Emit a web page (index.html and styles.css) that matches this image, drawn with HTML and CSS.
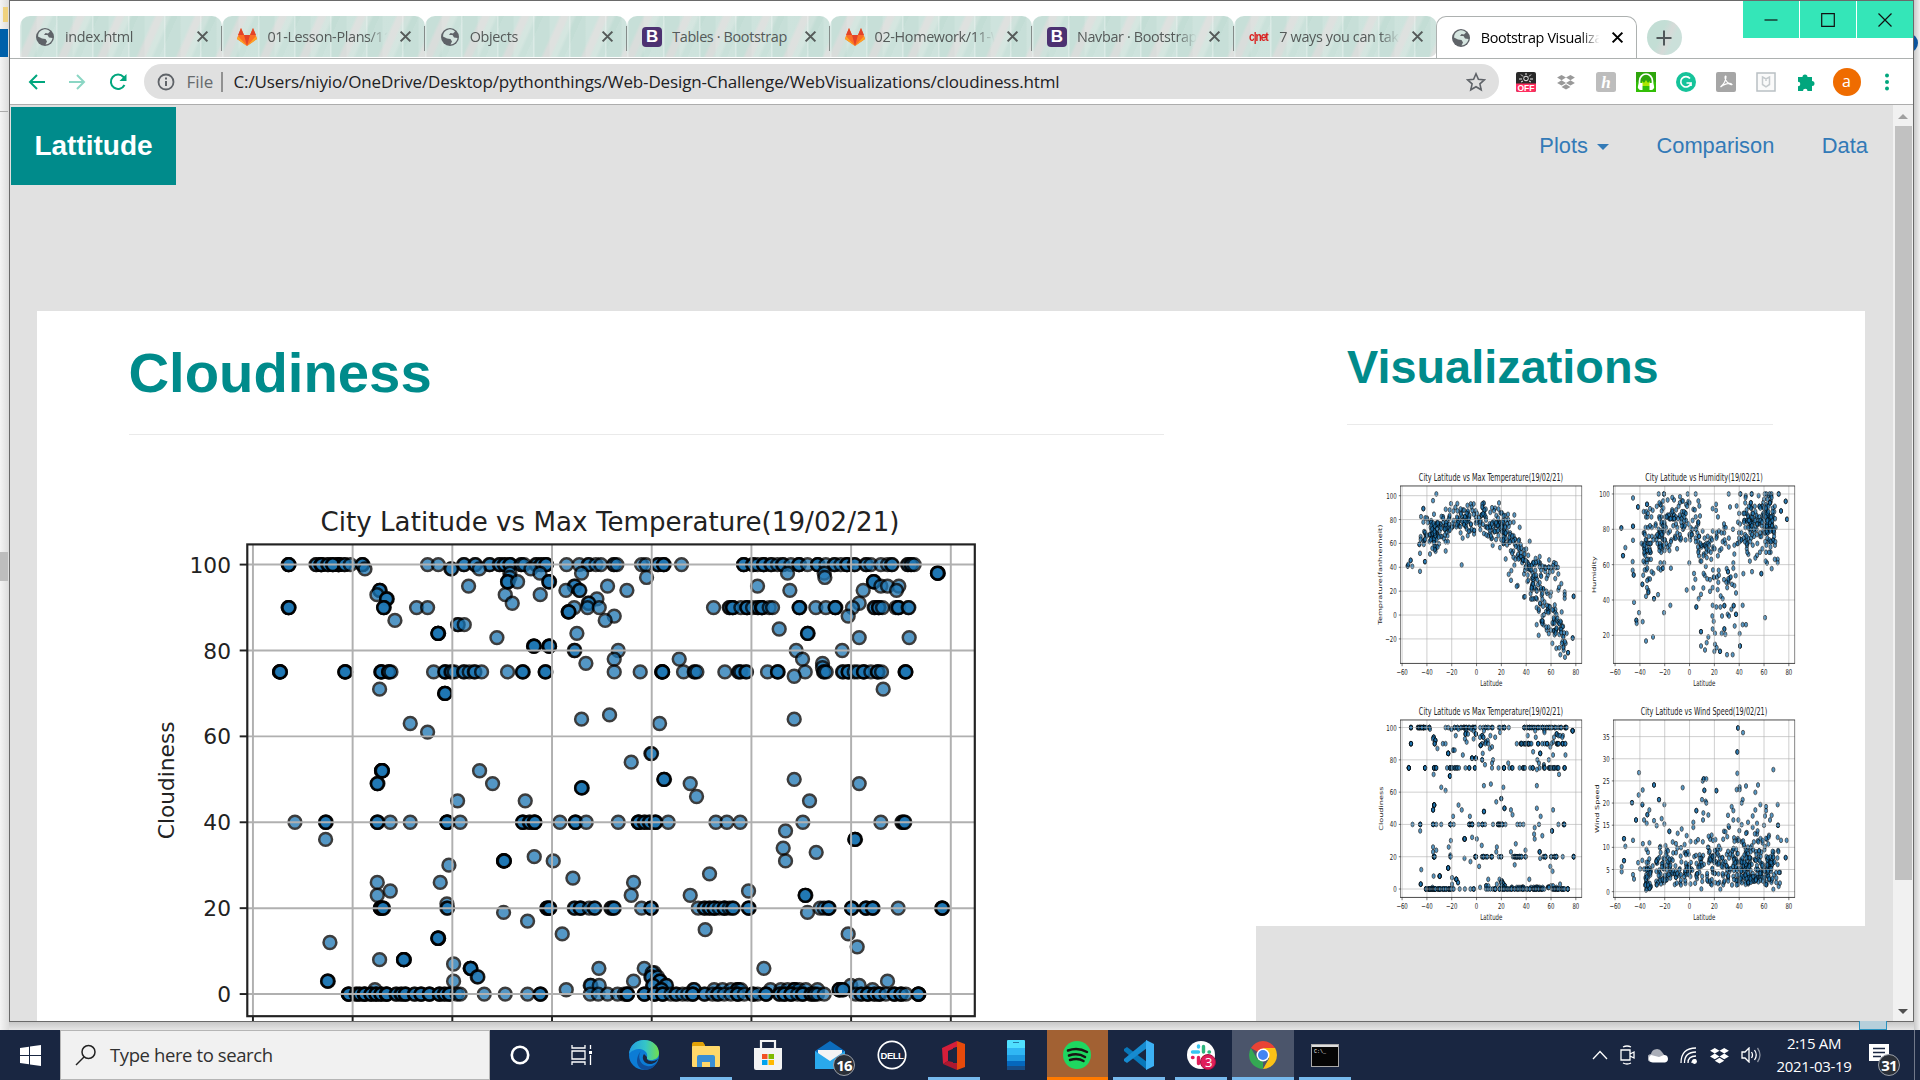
FILE: index.html
```html
<!DOCTYPE html>
<html lang="en">
<head>
<meta charset="utf-8">
<title>Bootstrap Visualizations</title>
<link rel="stylesheet" href="styles.css">
</head>
<body>
<svg class="defs" width="0" height="0">
  <symbol id="globe" viewBox="0 0 20 20"><circle cx="10" cy="10" r="9" fill="#5f6368"/><path d="M8.500 2.500C11 1.500 14 3 15 4.500L13 6.500 10.500 6 9 8H12.500L14 10.500 17.500 11C17 14.500 14 17.500 10.500 17.500L12 14.500 10.500 12 7 11.500 3 9.500C3 6 5 3.500 8.500 2.500Z" fill="#d5e5e0"/></symbol>
  <symbol id="fox" viewBox="0 0 20 20"><path d="M1 9 4 1 7 8H13L16 1 19 9 20 12 10 19 0 12Z" fill="#fc6d26"/><path d="M4 1 7 8H1ZM16 1 19 8H13ZM7 8H13L10 19Z" fill="#e24329"/><path d="M1 9 0 12 10 19ZM19 9 20 12 10 19Z" fill="#fca326"/></symbol>
  <symbol id="cross" viewBox="0 0 12 12"><path d="M1.500 1.500 10.500 10.500M10.500 1.500 1.500 10.500" stroke="currentColor" stroke-width="1.900"/></symbol>
  <symbol id="dropbox" viewBox="0 0 20 18"><path d="M5 1 10 4 5 7 0 4ZM15 1 20 4 15 7 10 4ZM5 7 10 10 5 13 0 10ZM15 7 20 10 15 13 10 10ZM10 11.500 15 14.500 10 17.500 5 14.500Z" fill="currentColor"/></symbol>
</svg>

<div class="desktop">
  <div class="edge edge-left"><i class="folder"></i><i class="blue"></i><i class="line"></i><i class="grip"></i></div>

  <div class="window">
    <div class="tabstrip">
      <div class="tab"><svg class="fav"><use href="#globe"/></svg><span class="title">index.html</span><svg class="x"><use href="#cross"/></svg></div>
      <div class="tab"><svg class="fav"><use href="#fox"/></svg><span class="title">01-Lesson-Plans/11</span><svg class="x"><use href="#cross"/></svg></div>
      <div class="tab"><svg class="fav"><use href="#globe"/></svg><span class="title">Objects</span><svg class="x"><use href="#cross"/></svg></div>
      <div class="tab"><b class="bs">B</b><span class="title plain">Tables · Bootstrap</span><svg class="x"><use href="#cross"/></svg></div>
      <div class="tab"><svg class="fav"><use href="#fox"/></svg><span class="title">02-Homework/11-W</span><svg class="x"><use href="#cross"/></svg></div>
      <div class="tab"><b class="bs">B</b><span class="title">Navbar · Bootstrap</span><svg class="x"><use href="#cross"/></svg></div>
      <div class="tab"><b class="cnet">c|net</b><span class="title">7 ways you can take</span><svg class="x"><use href="#cross"/></svg></div>
      <div class="tab active"><svg class="fav"><use href="#globe"/></svg><span class="title">Bootstrap Visualiza</span><svg class="x"><use href="#cross"/></svg></div>
      <div class="newtab"><svg width="16" height="16" viewBox="0 0 16 16"><path d="M8 .5V15.500M.5 8H15.500" stroke="#50585a" stroke-width="2"/></svg></div>
      <div class="controls">
        <span><svg width="14" height="14" viewBox="0 0 14 14"><path d="M.5 7H13.500"/></svg></span>
        <span><svg width="14" height="14" viewBox="0 0 14 14"><path d="M.7.7H13.300V13.300H.7Z"/></svg></span>
        <span><svg width="14" height="14" viewBox="0 0 14 14"><path d="M.5.5 13.500 13.500M13.500.5.5 13.500"/></svg></span>
      </div>
    </div>

    <div class="toolbar">
      <svg class="nav-ico" viewBox="0 0 20 20"><path d="M18 10H3M10 3 3 10 10 17"/></svg>
      <svg class="nav-ico dim" viewBox="0 0 20 20"><path d="M2 10H17M10 3 17 10 10 17"/></svg>
      <svg class="nav-ico" viewBox="0 0 20 20"><path d="M16.500 13A7.200 7.200 0 1 1 15.500 5L17 7"/><path d="M18.500 2V9H11.500Z" fill="#00a67d" stroke="none"/></svg>
      <div class="omnibox">
        <svg width="18" height="18" viewBox="0 0 18 18"><circle cx="9" cy="9" r="7.500" fill="none" stroke="#5f6368" stroke-width="1.800"/><path d="M9 8V13M9 4.500V6.500" stroke="#5f6368" stroke-width="2"/></svg>
        <span class="scheme">File</span><i></i><span class="url">C:/Users/niyio/OneDrive/Desktop/pythonthings/Web-Design-Challenge/WebVisualizations/cloudiness.html</span>
        <svg class="star" width="20" height="20" viewBox="0 0 20 20"><path d="M10 1.800 12.400 7.300 18.400 7.900 13.900 11.900 15.200 17.800 10 14.700 4.800 17.800 6.100 11.900 1.600 7.900 7.600 7.300Z" fill="none" stroke="#5f6368" stroke-width="1.600"/></svg>
      </div>
      <div class="exts">
        <svg viewBox="0 0 20 20"><rect width="20" height="20" rx="2" fill="#292929"/><circle cx="10" cy="6.500" r="2.300" fill="none" stroke="#eee"/><path d="M10 1V3M5 2.500 7 4.500M15 2.500 13 4.500M3 7H6M14 7H17M5 10 7 9M15 10 13 9" stroke="#eee"/><path d="M0 11.500H20V18A2 2 0 0 1 18 20H2A2 2 0 0 1 0 18Z" fill="#ff2e5f"/><text x="10" y="18.800" class="off">OFF</text></svg>
        <svg viewBox="0 0 20 20" class="grey"><use href="#dropbox" x="1" y="2" width="18" height="16"/></svg>
        <svg viewBox="0 0 20 20"><rect width="20" height="20" rx="2.500" fill="#bdbdbd"/><text x="10" y="16" class="honey">h</text></svg>
        <svg viewBox="0 0 20 20"><rect width="20" height="20" fill="#2ea50c"/><rect y="10" width="20" height="10" fill="#35d900" opacity=".5"/><path d="M3.500 15V9A6.500 7 0 0 1 16.500 9V15" fill="none" stroke="#fff" stroke-width="1.700"/><path d="M6 9 8 11 10 8 12 11 14 9V14H6Z" fill="#ace600"/><path d="M3 11H6.500V18H5A3 3 0 0 1 2 14ZM17 11H13.500V18H15A3 3 0 0 0 18 14Z" fill="#fff"/></svg>
        <svg viewBox="0 0 20 20"><circle cx="10" cy="10" r="10" fill="#15c39a"/><path d="M14 6.500A5.200 5.200 0 1 0 15 11H10.500M15 11V14" fill="none" stroke="#fff" stroke-width="1.700"/></svg>
        <svg viewBox="0 0 20 20"><rect width="20" height="20" rx="2" fill="#a6a6a6"/><path d="M4.500 15C8 12 10 8 10 4.500 9 3 8.500 6 10 8.500 11.500 11 15 13.500 16 12.500 14 10 7 12.500 4.500 15Z" fill="none" stroke="#fff" stroke-width="1.200"/></svg>
        <svg viewBox="0 0 20 20"><rect x="1" y="1" width="18" height="18" fill="#fafafa" stroke="#b9c0c4" stroke-width="1.500"/><path d="M6.500 5 10 7 13.500 5V12.500L10 14.800 6.500 12.500ZM10 7V9" fill="none" stroke="#c5cacd" stroke-width="1.500"/></svg>
        <svg viewBox="0 0 20 20"><path d="M2 5H6.500A2.500 2.500 0 1 1 11.500 5H16V9A2.500 2.500 0 1 1 16 14V19H11.500A2.200 2.200 0 0 0 7 19H2V14.300A2.300 2.300 0 0 0 2 9.700Z" fill="#00a67d"/></svg>
        <b class="avatar">a</b>
        <svg viewBox="0 0 20 20" fill="#00a67d"><circle cx="10" cy="3.500" r="2"/><circle cx="10" cy="10" r="2"/><circle cx="10" cy="16.500" r="2"/></svg>
      </div>
    </div>

    <div class="viewport">
      <div class="page">
        <nav class="navbar">
          <a class="brand">Lattitude</a>
          <div class="links"><a>Plots<i class="caret"></i></a><a>Comparison</a><a>Data</a></div>
        </nav>
        <div class="columns">
          <section class="main-col">
            <h1>Cloudiness</h1>
            <hr>
            <svg class="plot big" data-plot="cloud"></svg>
          </section>
          <aside class="side-col">
            <h2>Visualizations</h2>
            <hr>
            <div class="thumbs">
              <svg class="plot" data-plot="temp"></svg>
              <svg class="plot" data-plot="humid"></svg>
              <svg class="plot" data-plot="cloud"></svg>
              <svg class="plot" data-plot="wind"></svg>
            </div>
          </aside>
        </div>
      </div>
      <div class="scrollbar"><i class="up"></i><i class="thumb"></i><i class="down"></i></div>
    </div>
  </div>

  <div class="edge edge-right"><i class="dot"></i></div>
  <i class="peek"></i>
</div>

<footer class="taskbar">
  <div class="start"><svg width="21" height="21" viewBox="0 0 21 21" fill="#fff"><path d="M0 3 9 1.700V10H0ZM10 1.500 21 0V10H10ZM0 11H9V19.300L0 18ZM10 11H21V21L10 19.500Z"/></svg></div>
  <div class="search"><svg width="22" height="22" viewBox="0 0 22 22"><circle cx="13.500" cy="8" r="6.500"/><path d="M9 13 1 21"/></svg>Type here to search</div>
  <div class="apps">
    <div><svg width="20" height="20" viewBox="0 0 20 20"><circle cx="10" cy="10" r="8.200" fill="none" stroke="#fff" stroke-width="2.600"/></svg></div>
    <div><svg width="22" height="20" viewBox="0 0 22 20" fill="none" stroke="#fff" stroke-width="1.300"><path d="M1 0V3H14V0M1 6H14V14H1ZM1 20V17H14V20M19.500 0V4M19.500 10V20"/><path d="M18 6H21V9H18Z" fill="#fff" stroke="none"/></svg></div>
    <div><svg width="30" height="30" viewBox="0 0 30 30"><defs><linearGradient id="eg"><stop offset="0" stop-color="#239de0"/><stop offset=".55" stop-color="#35c5c8"/><stop offset="1" stop-color="#72df4b"/></linearGradient></defs><circle cx="15" cy="15" r="15" fill="#0c7cd5"/><path d="M0 14C1 5 7 0 15 0 24 0 30 6 30 13 30 18 26 20 22 20 19 20 17 19 18 17 19 14 17 10 11 9 6 9 2 11 0 14Z" fill="url(#eg)"/><path d="M12 11C8 16 11 25 18 26 22 27 26 25 28 22 26 27 21 30 16 30 8 29 5 19 12 11Z" fill="#104e9a"/><path d="M18 17C17 21 23 23 29 19 28 22 24 24 21 24 15 24 12 18 15 14Z" fill="#1a2742"/></svg></div>
    <div class="open"><svg width="28" height="26" viewBox="0 0 28 26"><path d="M0 2Q0 0 2 0H11L13 3V6H0Z" fill="#e0a106"/><rect y="4" width="28" height="21" rx="1" fill="#ffd86a"/><path d="M5 25V15Q5 13 7 13H21Q23 13 23 15V25H18V20H10V25Z" fill="#3a8fd4"/></svg></div>
    <div><svg width="28" height="30" viewBox="0 0 28 30"><path d="M7 9V1H21V9" fill="none" stroke="#f3f3f3" stroke-width="2.200"/><path d="M0 8H28V28Q28 30 26 30H2Q0 30 0 28Z" fill="#f3f3f3"/><path d="M8 14H13.500V19H8Z" fill="#f25022"/><path d="M14.500 14H20V19H14.500Z" fill="#7fba00"/><path d="M8 20H13.500V25H8Z" fill="#00a4ef"/><path d="M14.500 20H20V25H14.500Z" fill="#ffb900"/></svg></div>
    <div><svg width="30" height="28" viewBox="0 0 30 28"><path d="M0 10 15 0 30 10V28H0Z" fill="#0c6cbd"/><path d="M3 9H27V21H3Z" fill="#f4f4f4"/><path d="M0 10 15 20 30 10V28H0Z" fill="#2aa9ec"/></svg><b class="badge">16</b></div>
    <div><svg width="30" height="30" viewBox="0 0 30 30"><circle cx="15" cy="15" r="13.700" fill="none" stroke="#fff" stroke-width="1.700"/><text x="15" y="18.700" class="dell">DELL</text></svg></div>
    <div class="open"><svg width="24" height="29" viewBox="0 0 24 29"><path d="M0 7 15 0V6L6 10V20L1 23Z" fill="#d51e3a"/><path d="M15 0 23 3V26L15 29Z" fill="#e64a0b"/><path d="M1 23 6 20 15 22V29Z" fill="#ad1830"/><path d="M15 6 11 7V22H15Z" fill="#1a2742"/></svg></div>
    <div><svg width="18" height="30" viewBox="0 0 18 30"><rect width="18" height="30" rx="1" fill="#50e0ff"/><path d="M0 8H18V15H0Z" fill="#30b7f4"/><path d="M0 15H18V21H0Z" fill="#1d98df"/><path d="M0 21H18V26H0Z" fill="#0568bd"/><path d="M0 26H18V30H0Z" fill="#164d87"/><path d="M6 2.500H12" stroke="#247eaa"/></svg></div>
    <div class="spot"><svg width="28" height="28" viewBox="0 0 28 28"><circle cx="14" cy="14" r="14" fill="#1ed760"/><path d="M5 9.500Q15 6 24 11M6 14.500Q15 11.500 22 16M7 19Q15 16.500 20.500 20" fill="none" stroke="#191414" stroke-width="2.500" stroke-linecap="round"/></svg></div>
    <div class="open"><svg width="30" height="30" viewBox="0 0 30 30"><path d="M0 9 3 7 23 22V30L0 11Z" fill="#0877b9"/><path d="M0 21 3 23 23 8V0L0 19Z" fill="#168bd0"/><path d="M22 0 30 4V26L22 30Z" fill="#3cb1f5"/></svg></div>
    <div class="open"><svg width="28" height="28" viewBox="0 0 28 28"><circle cx="14" cy="14" r="14" fill="#fff"/><g stroke-width="3.400" stroke-linecap="round"><path d="M5.500 11H11.500M11.500 5V6" stroke="#36c5f0"/><path d="M16.500 5.500V11M22 11H22.500" stroke="#2eb67d"/><path d="M16.500 16.500H22.500" stroke="#ecb22e"/><path d="M11.500 16.500V22.500M5.500 16.500H6" stroke="#e01e5a"/></g></svg><b class="badge pink">3</b></div>
    <div class="open current"><svg width="28" height="28" viewBox="0 0 28 28"><path d="M14 14 1.900 7A14 14 0 0 1 26.100 7Z" fill="#ea4335"/><path d="M14 7H26.100A14 14 0 0 1 14 28L20 17.500Z" fill="#fbc116"/><path d="M1.900 7 8 17.500 14 21 14 28A14 14 0 0 1 1.900 7Z" fill="#34a853"/><circle cx="14" cy="14" r="6.500" fill="#fff"/><circle cx="14" cy="14" r="5" fill="#4285f4"/></svg></div>
    <div class="open"><svg width="28" height="23" viewBox="0 0 28 23"><rect x=".5" y=".5" width="27" height="22" fill="#050505" stroke="#aaa"/><path d="M1 1H27V3H1Z" fill="#ddd"/><text x="3" y="9" class="cmd">C:\_</text></svg></div>
  </div>
  <div class="tray">
    <svg width="16" height="10" viewBox="0 0 16 10"><path d="M1 9 8 1.500 15 9"/></svg>
    <svg width="16" height="20" viewBox="0 0 16 20"><path d="M1 5H10V15H1ZM10 9 14 7V13L10 11M3 2Q7 0 11 2M3 18Q7 20 11 18"/></svg>
    <svg width="20" height="15" viewBox="0 0 20 15"><path d="M4 14A4 4 0 0 1 3 6 6 6 0 0 1 14 4L17 8Z" fill="#aaaeb8" stroke="none"/><path d="M5 14.500A4 4 0 0 1 3 7L11 9 16 7A3.800 3.800 0 0 1 17 14.500Z" fill="#fff" stroke="none"/></svg>
    <svg width="18" height="18" viewBox="0 0 18 18"><path d="M1 17Q1 2 16 2M4.500 17Q4.500 6 16 6M8 17Q8 10 16 10M12 17Q12 14 16 14"/><circle cx="14.500" cy="15.500" r="1.800" fill="#fff"/></svg>
    <svg width="19" height="17" class="white"><use href="#dropbox" stroke="none"/></svg>
    <svg width="20" height="16" viewBox="0 0 20 16"><path d="M1 5H4L8 1V15L4 11H1ZM10.500 5Q12.500 8 10.500 11M13.500 3Q17 8 13.500 13"/><path d="M16.500 1Q21.500 8 16.500 15" opacity=".5"/></svg>
    <div class="clock"><span>2:15 AM</span><span>2021-03-19</span></div>
    <div class="notes"><svg width="20" height="20" viewBox="0 0 20 20"><path d="M0 0H20V17H0Z" fill="#fff" stroke="none"/><path d="M4 4.500H16M4 8.500H16M4 12.500H12" stroke="#1a2742"/></svg><b class="badge">31</b></div>
  </div>
</footer>
<script src="plots.js"></script>
</body>
</html>
```
FILE: styles.css
```css
* { box-sizing: border-box; }
body { margin: 0; width: 1920px; height: 1080px; overflow: hidden; font-family: "Open Sans", "Noto Sans", sans-serif; background: #ececec; display: flex; flex-direction: column; }
.defs { position: absolute; }
i { display: block; font-style: normal; }

.desktop { position: relative; display: flex; height: 1030px; background: linear-gradient(#f1f1f1 0 1021px, #c4c4c4 1021px, #e6e6e6 1030px); }
.edge { position: relative; flex: none; }
.edge-left { width: 8.500px; background: linear-gradient(90deg, #f4f4f4, #dcdcdc); }
.edge-left i { position: absolute; left: 0; width: 8px; }
.edge-left .folder { top: 7px; left: 3px; width: 5px; height: 15px; background: #efd27f; }
.edge-left .blue { top: 29px; height: 28px; background: #0060aa; }
.edge-left .line { top: 111px; height: 1px; background: #aaa; }
.edge-left .grip { top: 552px; height: 29px; background: #bdbdbd; }
.edge-right { width: 6px; overflow: hidden; background: linear-gradient(90deg, #c9c9c9, #f0f0f0); }
.edge-right .dot { position: absolute; left: -12px; top: 34px; width: 16px; height: 18px; border-radius: 50%; background: #0b539c; }
.peek { position: absolute; left: 1859px; top: 1021px; width: 28px; height: 9px; background: #b6cfdb; border: 1px solid #2a93c0; border-top: 0; }

.window { flex: none; width: 1905.500px; height: 1021.500px; border: 1px solid #6a6a6a; background: #fff; display: flex; flex-direction: column; }
.tabstrip { flex: none; height: 58px; padding: 15px 0 0 10.500px; display: flex; border-bottom: 1px solid #adb1b0; }
.tab { position: relative; flex: none; width: 202.400px; height: 41px; padding: 0 13px 0 15px; display: flex; align-items: center; color: #555a59; border-radius: 10px 10px 0 0;
  background: repeating-linear-gradient(90deg, rgba(255,255,255,.35) 0 1px, transparent 2px 16px, rgba(255,255,255,.12) 17px 36px), repeating-linear-gradient(114deg, #c7dfd8 0 14px, #d9dddb 17px 22px, #cfe2dc 25px 28px, #c3ddd5 31px 36px); }
.tab:not(.active)::after { content: ""; position: absolute; right: 0; top: 10px; width: 1px; height: 25px; background: #858c8a; }
.tab:nth-child(7)::after { display: none; }
.tab:nth-child(7) { border-radius: 10px 10px 8px 0; }
.fav { flex: none; width: 20px; height: 20px; }
.tab .title { flex: 1; margin-left: 10px; font-size: 14.400px; letter-spacing: -.35px; white-space: nowrap; overflow: hidden; -webkit-mask-image: linear-gradient(90deg, #000 82%, transparent 98%); mask-image: linear-gradient(90deg, #000 82%, transparent 98%); }
.tab .title.plain { -webkit-mask-image: none; mask-image: none; }
.x { flex: none; width: 13px; height: 13px; margin-left: 9px; }
.tab.active { height: 42px; width: 201px; background: #fff; border: 1px solid #adb1b0; border-bottom: 0; color: #000; margin-left: -1px; padding-left: 14px; padding-right: 12px; }
.bs { flex: none; width: 20px; height: 20px; border-radius: 4px; background: #4c3171; color: #fff; font: bold 17px/20px "Liberation Sans", sans-serif; text-align: center; }
.cnet { flex: none; width: 20px; color: #d9201f; font: bold 12.500px/20px "Liberation Sans", sans-serif; letter-spacing: -1.300px; transform: scaleX(.82); transform-origin: 0 50%; white-space: nowrap; }
.newtab { width: 35px; height: 35px; margin: 4px 0 0 10px; border-radius: 50%; background: linear-gradient(114deg, #c3ded5 40%, #d6dad8 58%, #cbe0da 70%); display: grid; place-items: center; }
.controls { margin: -15px 0 0 auto; display: flex; gap: 1px; height: 37px; }
.controls span { width: 56px; background: #34e6b8; display: grid; place-items: center; }
.controls svg { fill: none; stroke: #111; stroke-width: 1.200; }

.toolbar { flex: none; height: 46px; display: flex; align-items: center; padding-left: 17px; border-bottom: 1px solid #adadad; }
.nav-ico { width: 20px; height: 20px; margin-right: 20.500px; fill: none; stroke: #00a67d; stroke-width: 2; }
.nav-ico.dim { opacity: .45; }
.omnibox { flex: none; width: 1355px; height: 35px; margin-left: -4.500px; padding: 0 13px; border-radius: 18px; background: #e0e0e0; display: flex; align-items: center; font-size: 17px; color: #202124; }
.omnibox .scheme { margin-left: 12px; width: 34px; color: #666a6d; }
.omnibox i { width: 2px; height: 20px; background: #919191; margin-right: 11px; }
.omnibox .url { white-space: nowrap; letter-spacing: -.135px; }
.star { margin-left: auto; }
.exts { display: flex; align-items: center; gap: 20px; margin-left: 17.500px; }
.exts svg { width: 20px; height: 20px; }
.exts .grey { color: #999; }
.off { font: bold 8.500px "Liberation Sans", sans-serif; fill: #fff; text-anchor: middle; }
.honey { font: italic bold 17px "Liberation Serif", serif; fill: #fff; text-anchor: middle; }
.avatar { width: 28px; height: 28px; margin: 0 -4px 0 -3.500px; border-radius: 50%; background: #ef6c00; color: #fff; font: 16px/27px "Open Sans", sans-serif; text-align: center; }

.viewport { flex: 1; min-height: 0; display: flex; overflow: hidden; }
.page { width: 1884px; background: #e1e1e1; overflow: hidden; font-family: "Liberation Sans", Arial, sans-serif; }
.navbar { display: flex; justify-content: space-between; height: 206px; padding: 2px 25px 0 1.500px; }
.brand { width: 165px; height: 78px; background: #008b8b; color: #fff; font-weight: bold; font-size: 28px; line-height: 78px; text-align: center; }
.links { display: flex; gap: 47.500px; font-size: 21.875px; color: #337ab7; }
.links a { display: flex; align-items: center; height: 78px; }
.caret { margin: 2px 0 0 9px; border: 6px solid transparent; border-top: 6px solid #337ab7; border-bottom: 0; }
.columns { display: flex; align-items: flex-start; margin-left: 27.500px; }
h1, h2 { margin: 0; color: #008b8b; font-weight: bold; }
hr { margin: 0; border: 0; border-top: 1px solid #eaeaea; }
.main-col { width: 1219px; height: 760px; padding: 31px 92px 0 91.500px; background: #fff; }
h1 { font-size: 56.250px; line-height: 62px; height: 92px; }
.side-col { width: 609px; height: 615px; padding: 31px 92px 0 91px; background: #fff; }
h2 { font-size: 46.875px; line-height: 50px; height: 82px; }
.thumbs { display: grid; grid-template-columns: 213px 213px; grid-auto-rows: 234.300px; margin: 35.500px 0 0 19px; }
.plot { display: block; width: 213px; height: 234px; }
.plot.big { width: 855.500px; height: 622.400px; margin: 42.500px 0 0 -21px; }
.plot text { font-family: "DejaVu Sans", sans-serif; font-size: 10px; fill: #222; }
.plot .heading { font-size: 12px; }
.plot .grid { stroke: #b0b0b0; stroke-width: .9; }
.plot .frame { fill: none; stroke: #222; stroke-width: 1; }
.plot .tick { stroke: #222; stroke-width: .9; }
.plot circle { fill: #1f77b4; stroke: #000; stroke-width: 1.150; opacity: .76; }

.scrollbar { width: 20px; background: #f1f1f1; display: flex; flex-direction: column; align-items: center; }
.scrollbar .up { margin-top: 9px; border: 5px solid transparent; border-bottom: 5px solid #a0a0a0; border-top: 0; }
.scrollbar .thumb { margin-top: 7px; width: 17px; height: 754px; background: #c1c1c1; }
.scrollbar .down { margin-top: auto; margin-bottom: 7px; border: 5px solid transparent; border-top: 5px solid #505050; border-bottom: 0; }

.taskbar { height: 50px; display: flex; background: #192641; color: #fff; }
.start { width: 60px; display: grid; place-items: center; }
.search { width: 430px; background: #f1f1f1; border: 1px solid #b5b5b5; color: #303030; display: flex; align-items: center; font-size: 18.500px; letter-spacing: -.4px; padding-left: 14px; padding-bottom: 1px; gap: 13px; }
.search svg { fill: none; stroke: #222; stroke-width: 1.500; }
.apps { display: flex; margin-left: -.5px; }
.apps > div { position: relative; width: 61.900px; display: grid; place-items: center; }
.apps .open::after { content: ""; position: absolute; bottom: 0; left: 5px; right: 5px; height: 3px; background: #76b9ed; }
.apps .current { background: #4b556b; }
.apps .current::after { left: 0; right: 0; }
.apps .spot { background: #a26133; border-bottom: 3px solid #ff7a00; padding-top: 3px; }
.badge { position: absolute; left: 34px; top: 24px; width: 22px; height: 22px; border-radius: 50%; border: 1px solid #9a9fa8; background: #2b3038; font: bold 15px/20px "Open Sans", sans-serif; text-align: center; letter-spacing: -.8px; }
.badge.pink { left: 30px; top: 24px; width: 16px; height: 16px; background: #e01e5a; border-color: #a5113f; font: 13px/14px "Open Sans", sans-serif; }
.dell { font: bold 9.500px "Liberation Sans", sans-serif; fill: #fff; text-anchor: middle; letter-spacing: -.5px; }
.cmd { font: 5px "Liberation Mono", monospace; fill: #fff; }
.tray { margin-left: auto; display: flex; align-items: center; gap: 12px; }
.tray svg { fill: none; stroke: #fff; stroke-width: 1.300; }
.tray .white { color: #fff; }
.clock { display: flex; flex-direction: column; align-items: center; width: 82px; margin: -1px 2px 0 0; font-size: 15px; line-height: 23px; letter-spacing: -.35px; white-space: nowrap; }
.notes { position: relative; width: 46px; height: 50px; padding: 14px 0 0 0; border-right: 1px solid #71798a; margin-right: 5px; }
.notes .badge { left: 9px; top: 24px; }
```
FILE: plots.js
```js
const NS = 'http://www.w3.org/2000/svg';
// Figure space: the axes frame is 334.8 x 217.4 with its corner at the origin.
const W = 334.8, H = 217.4;

// Cloudiness samples: "value: position*repeats ..." in raster positions.
const CLOUD = `
100: 442*4 525*2 540*4 560*2 592*4 575*3 610*2 628 664*3 860 892 968*2 1002*2 1045*2 1075*2 1090*2 1107*3 1140*2 1150 1185*2 1200*2 1215*3 1277 1315 1342*2 1365 1380 1418*2 1428 1502 1515 1550*2 1568*3 1622 1808*3 1835*2 1850 1868*3 1890*2 1910 1925*2 1950 1974*3 2000 2030*3 2055 2080*2 2100 2118*3 2140*2 2175*2 2190 2220 2240 2252*2 2300*2 2310*2 2320
99: 672 930*2 1015 1170
98: 1322 2390*5 1940 2050 1107 1197
97: 1517 2052 1107
96: 1100*3 1130 1224*3 2198*3
95: 983 1400 1300*2 1850 2220 2240 2274
94: 716*3 1275 1315*2 1458 1947 2167 2267
93: 708 1093 1198
92: 737*3 1368
91: 1114 1342*2 2155
90: 442*4 728*3 827 860 1300 1340 1375 1718 1765*2 1775*3 1800 1818*3 1835 1850*2 1862*4 1885 1895 1975*3 2025 2055 2083*3 2135 2200*2 2213*3 2225 2265 2272*3 2302*2
89: 1282*4
88: 1420 2122
87: 762 1393
86: 950*2 970
85: 1915
84: 891*5 1308 2000*3
83: 1068 2155 2305
81: 1178*4 1224*4
80: 1300*2 1432 1966 2104
78: 1420 1615 1985
77: 1335 2045
76: 2045
75: 416*6 612*5 720*4 743*3 750 878 912*3 930*2 940 968*2 985 1000*2 1022 1100 1145*3 1213*3 1420 1498 1563*6 1628 1660*2 1668 1752 1793*2 1800 1815*2 1880 1910*3 1993 2048*2 2056 2105*2 2122*3 2140 2150 2168*3 2190 2210*3 2222 2293*4
74: 1960
71: 716 2227
70: 911*4
65: 1406
64: 1322 1960
63: 808 1556
61: 860
56: 1530*2
54: 1471
52: 722*6 1016
50: 1569*3 1960
49: 709*3 1055 1648 2155
48: 1322*3
46: 1667
45: 950 1153 2006
40: 462 554*3 709*3 748 808 918*5 958 1145*3 1165*2 1180*4 1257 1303*3 1336 1432 1492*4 1510*2 1525*2 1543*3 1582 1725 1758 1798 1986 2220 2283*2 2290*2
38: 1934
36: 554 2142*3
34: 1927
33: 2026
32: 1180
31: 1088*6 1237 1934
30: 924
28: 1706
27: 1296
26: 709 898 1478
24: 748 1823
23: 709 1471 1648 1993*3
21: 918
20: 718*4 726*3 918*2 1218*3 1225*3 1300*2 1318*3 1345 1360*2 1410*2 1418*2 1502 1530*3 1672 1690*2 1705*2 1720*3 1735 1750*3 1765 1775*2 1823*3 2038 2050 2063*3 2132*3 2175*3 2195*3 2272 2403*4
19: 1088 2000
17: 1160
15: 1693
14: 1264 2122
13: 891*5
12: 567
11: 2149
8: 716 788*5
7: 938
6: 988*4 1374 1510 1869
5: 1540 1534
4: 1009*2 1530*2 1550
3: 560*3 938 1478 1557*3 2240
2: 1348*2 1375 1575*2 1535*2 2130 2155
1: 702 1276 1560*2 1658*2 1720 1745 1770 1790*3 1800 1889 1920 1940 1960*3 1975 1995 2030 2095*3 2105*2 2195
0: 622*4 645*2 655*2 670*4 690*3 705*3 720*3 736*4 765*2 780*2 793*3 820*2 840*3 865*3 895*3 910*2 925*3 948 958 1030 1093 1160 1198*3 1348 1372 1400 1430 1450 1458*4 1510*3 1540*3 1565*3 1590 1605*2 1625 1640 1655*3 1690*2 1715 1730*2 1750 1770 1790*3 1810 1835*3 1850 1875*3 1915*2 1930*3 1950*3 1970 1985*3 2010*2 2020*2 2030 2050 2145 2160*2 2180*3 2200*2 2215*3 2235 2260*3 2280*3 2295 2332*5`;

function cloudPoints() {
  const out = [];
  for (const row of CLOUD.trim().split('\n')) {
    const [v, list] = row.split(': ');
    for (const item of list.split(' ')) {
      const [x, n = 1] = item.split('*');
      for (let k = 0; k < +n; k++) out.push([(x - 319) / 6.52 + (k % 2) * 0.3, 9.3 + (100 - v) * 1.979]);
    }
  }
  return out;
}

let seed = 7;
function rnd() {
  seed = (seed + 0x6d2b79f5) | 0;
  let t = Math.imul(seed ^ (seed >>> 15), 1 | seed);
  t = (t + Math.imul(t ^ (t >>> 7), 61 | t)) ^ t;
  return ((t ^ (t >>> 14)) >>> 0) / 4294967296;
}
const tri = () => rnd() + rnd() - 1;
const bell = () => (rnd() + rnd() + rnd() - 1.5) / 1.5;
const lx = lat => 2.6 + (lat + 60) * 2.294;

function fromRaster(s, ox, oy) {
  return s.trim().split(/\s+/).map(p => p.split(',')).map(([x, y]) => [(x - ox) / 1.623, (y - oy) / 2.447]);
}

function tempPoints() {
  const out = fromRaster(`289,129 279,149 250,173 250,173 243,197 365,342 203,345 203,345 205,340 212,328 212,328 217,346 240,361 240,307 255,332 255,332 238,280 238,280 242,257 242,265 257,255 352,158 333,158 401,159 430,157 477,156 523,192 539,229 317,175 270,309 317,300 458,283 480,290 497,324 569,271 599,317 642,335 636,349 648,350 655,369 664,398 655,417 657,409 674,423 674,432 674,442 701,436 701,436 596,553 590,521 637,577 698,561 698,561 684,605 684,605 661,611 533,404 514,359 506,370 513,388 552,438 555,437 573,444 610,414 610,414 633,424 665,483 669,526 680,547 677,577 649,592 671,598 620,537 530,406 600,336 615,348 580,338`, 182, 105);
  const curve = [[-48, 58], [-42, 68], [-33, 73], [-20, 76], [0, 80], [10, 78], [20, 74], [28, 63], [38, 46], [45, 30], [52, 10], [60, 0], [66, -12], [72, -25]];
  const at = lat => {
    let i = 1;
    while (i < curve.length - 1 && curve[i][0] < lat) i++;
    const [a, p] = curve[i - 1], [b, q] = curve[i];
    return p + (q - p) * (lat - a) / (b - a);
  };
  for (let i = 0; i < 430; i++) {
    const lat = -43 + rnd() * 115;
    out.push([lx(lat), 11.900 + (100 - at(lat) - tri() * (lat > 25 ? 19 : 16)) * 1.463]);
  }
  for (let i = 0; i < 45; i++) out.push([lx(-34 + tri() * 5), 11.900 + (100 - 68 - tri() * 16) * 1.463]);
  for (let i = 0; i < 30; i++) out.push([lx(44 + rnd() * 22), 11.900 + (100 - 38 - tri() * 14) * 1.463]);
  return out;
}

function humidPoints() {
  const out = fromRaster(`844,231 844,231 849,314 849,314 856,290 879,141 879,226 879,226 879,268 878,332 878,358 881,372 881,372 894,168 894,168 882,454 889,508 889,508 890,517 897,485 908,512 918,570 939,558 991,463 972,485 954,431 942,443 942,443 918,436 925,424 925,418 925,424 907,400 907,400 925,384 930,384 940,367 972,129 972,129 1043,129 1067,129 1166,129 1201,129 1201,129 1235,129 1235,129 1279,129 1274,129 1316,129 1316,129 1337,151 1337,151 1341,205 1341,205 1323,180 1323,180 1275,500 1208,463 1188,426 1188,490 1188,490 1184,525 1199,548 1200,585 1200,585 1208,521 1218,521 1161,611 1178,611 1083,585 1095,597 1083,542 1083,542 1105,558 1100,575 1118,463 1117,495 1121,511 1118,534 1125,580 1130,590 1123,601 1140,601 1140,601 1125,547 1145,547 1156,550 1153,534 1153,534 1141,468 1129,468 1142,435 1148,443 1133,416 1118,410 1110,421 1069,468 1069,468 1076,443 1083,430 1040,417 1060,411 1090,411 1066,385 1094,373 1110,386 1122,380 1153,464 1153,464 1181,464 1181,464 1163,490 1167,495 1174,475 1146,495 1295,353 1281,336 1264,368 1264,368 1236,362 1210,368 1313,325 1313,335 1251,313 1246,321 1225,310 1180,336 1180,352 1187,374 1164,362 1170,380 1152,386 1176,400 1183,404 1165,394 1160,353 1136,358 921,160 921,160 938,178 930,173 962,162 983,147 1002,147 1020,137 1026,150 1045,152 1075,150 1078,165 1128,160 1128,178 1118,173 1170,168 1190,165 965,180 1000,190 1035,185 1060,175 1080,195`, 821, 105);
  // Each cluster is a centre, a spread and a count in latitude and percent.
  const add = (n, a, ra, h, rh) => {
    for (let i = 0; i < n; i++) out.push([lx(a + bell() * ra), 9.800 + (100 - Math.min(100, Math.round(h + bell() * rh))) * 2.166]);
  };
  add(52, -34, 7, 74, 30); add(62, -19, 15, 80, 24); add(36, -6, 12, 85, 20); add(24, -22, 6, 72, 26); add(22, 4, 12, 78, 26);
  add(36, 12, 12, 69, 15); add(26, 28, 18, 76, 18); add(12, 26, 16, 51, 8);
  add(72, 50, 15, 84, 22); add(72, 63, 10, 88, 18); add(34, 65, 8, 78, 20); add(22, 44, 14, 82, 28);
  return out;
}

function windPoints() {
  const out = fromRaster(`1194,112 1194,112 1209,126 1192,184 1192,184 1300,237 1192,248 897,246 896,313 908,298 942,283 942,283 957,327 957,327 973,342 907,342 907,342 1028,291 1088,271 1091,265 1091,265 1099,265 1093,299 1093,299 1129,300 1129,300 1086,327 1097,332 1099,337 1190,297 1199,289 1199,297 1218,286 1254,283 1246,305 1208,327 1205,337 1261,342 1313,342 876,336 876,336 888,388 888,388 922,372 922,372 928,358 920,398 912,388 965,384 973,400 942,390 950,405 988,422 988,422 852,444 852,444 879,449 856,467 852,510 852,510 845,528 845,543 879,552 882,565 1069,360 1069,360 1090,367 1105,373 1089,388 1060,395 1060,410 1025,415 1013,428 1040,435 1175,348 1180,360 1164,374 1180,388 1195,388 1167,410 1152,422 1198,420 1246,358 1238,376 1224,395 1238,410 1251,398 1278,348 1278,360 1275,376 1295,374 1290,388 1272,404 1314,404 1314,404 1287,434 1313,440 1323,449 1340,449 1337,501 1337,501 1320,545 1316,587 1300,596 1141,596 1084,595 918,598`, 821, 88);
  // Wind speeds thin out upwards from the low end of each band.
  const add = (n, a, b, lo, hi) => {
    for (let i = 0; i < n; i++) out.push([lx(a + rnd() * (b - a)), 20.400 + (35 - lo - rnd() * Math.pow(rnd(), .5) * (hi - lo)) * 5.429]);
  };
  add(42, -36, -31, .5, 13); add(130, -27, 12, 1.5, 12.500); add(120, 14, 50, 1.5, 14); add(105, 48, 73, 1.5, 14);
  add(60, 18, 72, 5, 16); add(16, -42, -8, 5, 13); add(14, 0, 28, 7, 14); add(35, 40, 55, 2, 8);
  return out;
}

const PLOTS = {
  cloud: { title: 'City Latitude vs Max Temperature(19/02/21)', len: 266.500, y: 'Cloudiness', yx: -33.500, ticks: [0, 20, 40, 60, 80, 100], ty: v => 9.300 + (100 - v) * 1.979, pts: cloudPoints },
  temp: { title: 'City Latitude vs Max Temperature(19/02/21)', len: 266.500, y: 'Temprature(fanhrenheit)', yx: -35, ticks: [-20, 0, 20, 40, 60, 80, 100], ty: v => 11.900 + (100 - v) * 1.463, pts: tempPoints },
  humid: { title: 'City Latitude vs Humidity(19/02/21)', len: 217, y: 'Humidity', yx: -32.500, ticks: [20, 40, 60, 80, 100], ty: v => 9.800 + (100 - v) * 2.166, pts: humidPoints },
  wind: { title: 'City Latitude vs Wind Speed(19/02/21)', len: 234, y: 'Wind Speed', yx: -27, ticks: [0, 5, 10, 15, 20, 25, 30, 35], ty: v => 20.400 + (35 - v) * 5.429, pts: windPoints }
};

function draw(svg) {
  const p = PLOTS[svg.dataset.plot];
  const add = (tag, attrs, text) => {
    const el = document.createElementNS(NS, tag);
    for (const k in attrs) el.setAttribute(k, attrs[k]);
    if (text !== undefined) el.textContent = text;
    svg.append(el);
  };
  svg.setAttribute('viewBox', '-64.100 -30.600 393.700 286.800');
  svg.setAttribute('preserveAspectRatio', 'none');
  svg.style.overflow = 'visible';
  for (const [x, y] of p.pts()) add('circle', { cx: x, cy: y, r: 2.950 });
  for (let lat = -60; lat <= 80; lat += 20) {
    const x = lx(lat);
    add('line', { class: 'grid', x1: x, x2: x, y1: 0, y2: H });
    add('line', { class: 'tick', x1: x, x2: x, y1: H, y2: H + 3.500 });
    add('text', { x, y: H + 14.500, 'text-anchor': 'middle' }, String(lat).replace('-', '−'));
  }
  for (const v of p.ticks) {
    const y = p.ty(v);
    add('line', { class: 'grid', x1: 0, x2: W, y1: y, y2: y });
    add('line', { class: 'tick', x1: -3.500, x2: 0, y1: y, y2: y });
    add('text', { x: -7.500, y: y + 3.700, 'text-anchor': 'end' }, String(v).replace('-', '−'));
  }
  add('rect', { class: 'frame', x: 0, y: 0, width: W, height: H });
  add('text', { class: 'heading', x: W / 2 - .5, y: -6.300, 'text-anchor': 'middle', textLength: p.len }, p.title);
  add('text', { x: W / 2, y: H + 28, 'text-anchor': 'middle' }, 'Latitude');
  add('text', { transform: `translate(${p.yx} ${H / 2}) rotate(-90)`, 'text-anchor': 'middle' }, p.y);
}
document.querySelectorAll('.plot').forEach(draw);
```
